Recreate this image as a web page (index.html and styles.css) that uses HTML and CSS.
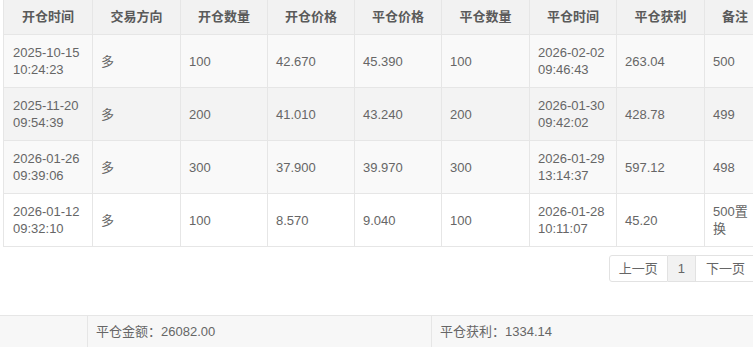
FILE: index.html
```html
<!DOCTYPE html>
<html lang="zh-CN">
<head>
<meta charset="utf-8">
<title>平仓记录</title>
<link rel="stylesheet" href="styles.css">
</head>
<body>
<div class="page">
  <div class="table-wrap">
    <table class="grid">
      <thead>
        <tr>
          <th class="c1">开仓时间</th>
          <th class="c2">交易方向</th>
          <th class="c3">开仓数量</th>
          <th class="c4">开仓价格</th>
          <th class="c5">平仓价格</th>
          <th class="c6">平仓数量</th>
          <th class="c7">平仓时间</th>
          <th class="c8">平仓获利</th>
          <th class="c9">备注</th>
        </tr>
      </thead>
      <tbody>
        <tr class="r1">
          <td class="first">2025-10-15<br>10:24:23</td><td>多</td><td>100</td><td>42.670</td><td>45.390</td><td>100</td><td>2026-02-02<br>09:46:43</td><td>263.04</td><td>500</td>
        </tr>
        <tr class="r2">
          <td class="first">2025-11-20<br>09:54:39</td><td>多</td><td>200</td><td>41.010</td><td>43.240</td><td>200</td><td>2026-01-30<br>09:42:02</td><td>428.78</td><td>499</td>
        </tr>
        <tr class="r3">
          <td class="first">2026-01-26<br>09:39:06</td><td>多</td><td>300</td><td>37.900</td><td>39.970</td><td>300</td><td>2026-01-29<br>13:14:37</td><td>597.12</td><td>498</td>
        </tr>
        <tr class="r4">
          <td class="first">2026-01-12<br>09:32:10</td><td>多</td><td>100</td><td>8.570</td><td>9.040</td><td>100</td><td>2026-01-28<br>10:11:07</td><td>45.20</td><td>500置换</td>
        </tr>
      </tbody>
    </table>
    <div class="pager">
      <a class="pg pg-prev">上一页</a>
      <a class="pg pg-cur">1</a>
      <a class="pg pg-next">下一页</a>
    </div>
  </div>
  <div class="summary">
    <div class="sum-cell sum-first"></div>
    <div class="sum-cell sum-mid">平仓金额：26082.00</div>
    <div class="sum-cell sum-last">平仓获利：1334.14</div>
  </div>
</div>
</body>
</html>
```

FILE: styles.css
```css
html, body {
  margin: 0;
  padding: 0;
  background: #fff;
  overflow: hidden;
}
body {
  font-family: "Liberation Sans", "Noto Sans CJK SC", sans-serif;
  font-size: 13px;
  color: #666;
}
.page {
  width: 753px;
  overflow: hidden;
}
.table-wrap {
  width: 765px;
}
.grid {
  margin-left: 3px;
  border-collapse: separate;
  border-spacing: 0;
  table-layout: fixed;
  width: 762px;
  border-left: 1px solid #e6e6e6;
}
.grid th, .grid td {
  box-sizing: border-box;
  border-right: 1px solid #e6e6e6;
  border-bottom: 1px solid #e6e6e6;
  line-height: 17px;
  vertical-align: middle;
}
.grid th {
  height: 35px;
  padding: 8px 2px 9px;
  background: #f2f2f2;
  color: #5a5a5a;
  font-weight: bold;
  text-align: center;
}
.grid td {
  height: 53px;
  padding: 9px 4px 9px 8px;
  text-align: left;
}
.grid td.first {
  padding-left: 9px;
}
.grid td:last-child {
  padding-right: 10px;
}
.c1 { width: 89px; }
.c2 { width: 88px; }
.c3 { width: 87px; }
.c4 { width: 87px; }
.c5 { width: 87px; }
.c6 { width: 88px; }
.c7 { width: 87px; }
.c8 { width: 88px; }
.c9 { width: 61px; }
.r1 td { background: #f9f9f9; }
.r2 td { background: #f3f3f3; }
.r3 td { background: #f9f9f9; }
.r4 td { background: #fff; }

.pager {
  display: flex;
  justify-content: flex-end;
  margin-top: 8px;
  padding-right: 9px;
}
.pg {
  display: block;
  height: 25px;
  line-height: 25px;
  padding: 0 9px;
  border: 1px solid #e2e2e2;
  border-left: none;
  color: #666;
  background: #fff;
}
.pg-prev {
  border-left: 1px solid #e2e2e2;
  border-radius: 3px 0 0 3px;
}
.pg-cur {
  padding: 0 10px;
  background: #f2f2f2;
}
.pg-next {
  padding: 0 10px;
}

.summary {
  display: flex;
  margin-top: 33px;
  border-top: 1px solid #e6e6e6;
  background: #f7f7f7;
  height: 40px;
}
.sum-cell {
  box-sizing: border-box;
  padding: 7px 8px;
  line-height: 17px;
  border-right: 1px solid #e6e6e6;
}
.sum-first { width: 88px; }
.sum-mid { width: 344px; }
.sum-last { flex: 1; border-right: none; }
```
